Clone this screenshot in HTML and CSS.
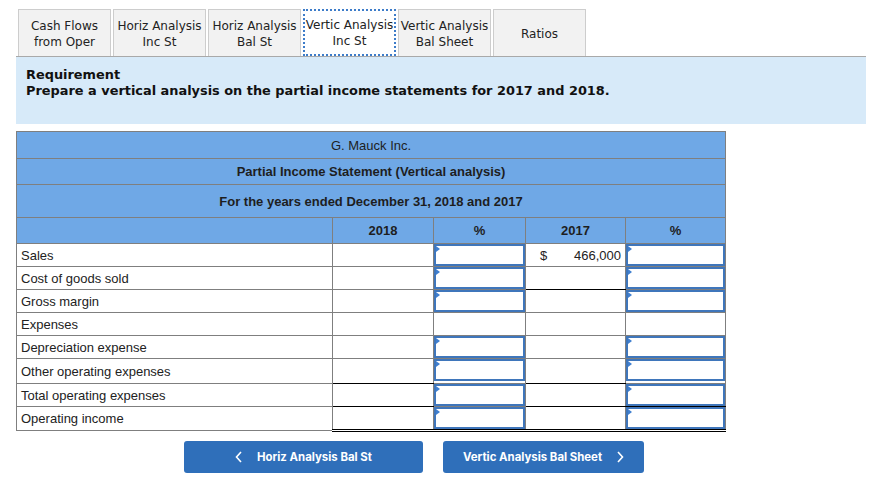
FILE: index.html
```html
<!DOCTYPE html>
<html>
<head>
<meta charset="utf-8">
<link rel="stylesheet" href="styles.css">
</head>
<body>
<div class="page">
  <div class="tabs">
    <div class="tab">Cash Flows<br>from Oper</div>
    <div class="tab">Horiz Analysis<br>Inc St</div>
    <div class="tab">Horiz Analysis<br>Bal St</div>
    <div class="tab active">Vertic Analysis<br>Inc St</div>
    <div class="tab">Vertic Analysis<br>Bal Sheet</div>
    <div class="tab">Ratios</div>
  </div>
  <div class="req">
    <div>Requirement</div>
    <div>Prepare a vertical analysis on the partial income statements for 2017 and 2018.</div>
  </div>
  <table class="stmt">
    <colgroup>
      <col class="c-label"><col class="c-2018"><col class="c-p1"><col class="c-2017"><col class="c-p2">
    </colgroup>
    <tr class="h h1"><td colspan="5">G. Mauck Inc.</td></tr>
    <tr class="h h2"><td colspan="5" class="b">Partial Income Statement (Vertical analysis)</td></tr>
    <tr class="h h3"><td colspan="5" class="b">For the years ended December 31, 2018 and 2017</td></tr>
    <tr class="h h4"><td></td><td class="b">2018</td><td class="b">%</td><td class="b">2017</td><td class="b">%</td></tr>
    <tr class="r">
      <td class="lbl">Sales</td><td></td>
      <td class="in"><div class="box"></div></td>
      <td class="amt"><span>$</span><span>466,000</span></td>
      <td class="in"><div class="box"></div></td>
    </tr>
    <tr class="r">
      <td class="lbl">Cost of goods sold</td><td></td>
      <td class="in"><div class="box"></div></td>
      <td class="ul"></td>
      <td class="in"><div class="box"></div></td>
    </tr>
    <tr class="r">
      <td class="lbl">Gross margin</td><td></td>
      <td class="in"><div class="box"></div></td>
      <td></td>
      <td class="in"><div class="box"></div></td>
    </tr>
    <tr class="r">
      <td class="lbl">Expenses</td><td></td><td></td><td></td><td></td>
    </tr>
    <tr class="r">
      <td class="lbl">Depreciation expense</td><td></td>
      <td class="in"><div class="box"></div></td>
      <td></td>
      <td class="in"><div class="box"></div></td>
    </tr>
    <tr class="r tall">
      <td class="lbl">Other operating expenses</td><td class="ul"></td>
      <td class="in"><div class="box"></div></td>
      <td class="ul"></td>
      <td class="in"><div class="box"></div></td>
    </tr>
    <tr class="r">
      <td class="lbl">Total operating expenses</td><td class="ul"></td>
      <td class="in"><div class="box"></div></td>
      <td class="ul"></td>
      <td class="in ul"><div class="box"></div></td>
    </tr>
    <tr class="r">
      <td class="lbl">Operating income</td><td class="dul"></td>
      <td class="in dul"><div class="box"></div></td>
      <td class="dul"></td>
      <td class="in dul"><div class="box"></div></td>
    </tr>
  </table>
  <div class="nav">
    <button class="btn prev">
      <svg width="8" height="12" viewBox="0 0 8 12"><polyline points="6,1 1.5,6 6,11" fill="none" stroke="#fff" stroke-width="1.6"/></svg>
      <span>Horiz Analysis Bal St</span>
    </button>
    <button class="btn next">
      <span>Vertic Analysis Bal Sheet</span>
      <svg width="8" height="12" viewBox="0 0 8 12"><polyline points="2,1 6.5,6 2,11" fill="none" stroke="#fff" stroke-width="1.6"/></svg>
    </button>
  </div>
</div>
</body>
</html>
```

FILE: styles.css
```css
html, body {
  margin: 0;
  padding: 0;
  background: #ffffff;
}

.page {
  padding: 9px 12px 0 16px;
  width: 850px;
}

.tabs {
  display: flex;
  gap: 2px;
  padding-left: 2px;
  border-bottom: 1px solid #a9a9a9;
}

.tab {
  box-sizing: border-box;
  width: 93px;
  height: 47px;
  display: flex;
  align-items: center;
  justify-content: center;
  text-align: center;
  background: #f2f2f2;
  border: 1px solid #cdcdcd;
  border-bottom: none;
  font-family: "DejaVu Sans", Verdana, sans-serif;
  font-size: 12px;
  line-height: 16px;
  padding-top: 1px;
  color: #222;
}

.tab.active {
  background: #ffffff;
  border: 2px dotted #3d7cc9;
}

.req {
  box-sizing: border-box;
  height: 67px;
  background: #d7eaf9;
  padding: 10px 10px;
  font-family: "DejaVu Sans", Verdana, sans-serif;
  font-weight: bold;
  font-size: 12.9px;
  line-height: 16px;
  color: #111;
}

.stmt {
  margin-top: 7px;
  border-collapse: collapse;
  width: 709px;
  table-layout: fixed;
  font-family: "Liberation Sans", Arial, sans-serif;
  font-size: 13px;
  color: #222;
}

.c-label { width: 316px; }
.c-2018 { width: 101px; }
.c-p1 { width: 92px; }
.c-2017 { width: 100px; }
.c-p2 { width: 100px; }

.stmt td {
  border: 1px solid #7f7f7f;
  padding: 0;
}

.h td {
  background: #6fa8e6;
  text-align: center;
  color: #1e1e1e;
}

.b { font-weight: bold; }

.h1 td { height: 26px; }
.h2 td { height: 25px; }
.h3 td { height: 32px; }
.h4 td { height: 25px; }

.r td { height: 22px; }
.r.tall td { height: 24px; }

.stmt td.lbl {
  padding-left: 4px;
}

.in {
  position: relative;
  vertical-align: top;
}

.box {
  box-sizing: border-box;
  height: 22px;
  border: 2px solid #3f76bb;
  background: #fff;
}

.in::before {
  content: "";
  position: absolute;
  left: 2px;
  top: 2px;
  border-left: 4px solid #3f7fd0;
  border-top: 3px solid transparent;
  border-bottom: 3px solid transparent;
}

.stmt td.amt {
  padding: 0 4px 0 14px;
}

.amt span:first-child {
  float: left;
}

.amt span:last-child {
  float: right;
}

.stmt td.ul { border-bottom: 1px solid #000; }
.stmt td.dul { border-bottom: 3px double #000; }

.nav {
  display: flex;
  gap: 20px;
  padding-left: 168px;
  margin-top: 9px;
}

.btn {
  height: 32px;
  border: none;
  border-radius: 3px;
  background: #2f6fba;
  color: #fff;
  font-family: Inter, "Liberation Sans", sans-serif;
  font-weight: 700;
  font-size: 11.4px;
  display: flex;
  align-items: center;
  justify-content: center;
  gap: 14px;
  padding: 0;
}

.btn.prev { width: 239px; }
.btn.next { width: 201px; }
```
